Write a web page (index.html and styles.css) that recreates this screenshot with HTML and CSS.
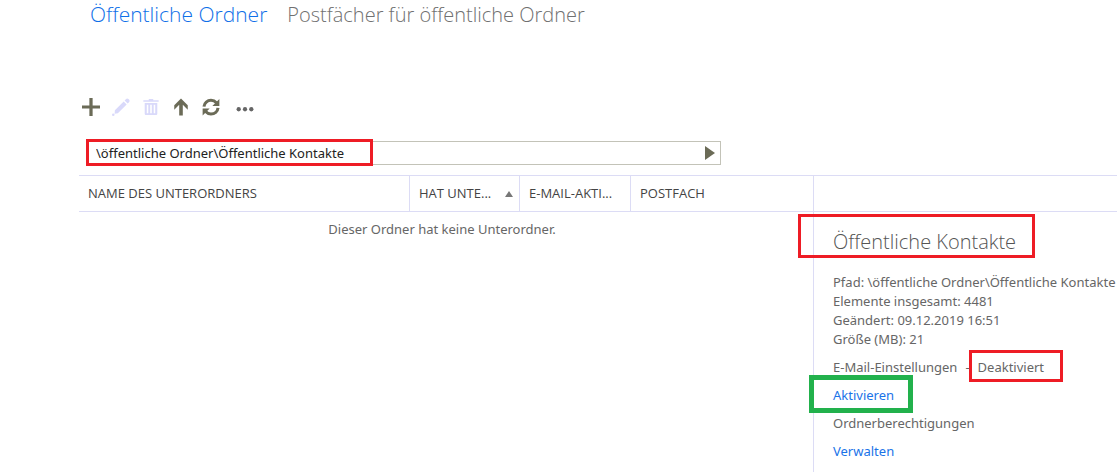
FILE: index.html
```
<!DOCTYPE html>
<html lang="de">
<head>
<meta charset="utf-8">
<title>Öffentliche Ordner</title>
<link rel="stylesheet" href="styles.css">
</head>
<body>
<div class="page">
  <nav class="tabs">
    <a class="tab tab-active" href="#ordner">Öffentliche Ordner</a>
    <a class="tab" href="#postfaecher">Postfächer für öffentliche Ordner</a>
  </nav>

  <div class="toolbar">
    <button class="tool" type="button" aria-label="Neu">
      <svg viewBox="0 0 20 20"><path d="M10 0v20M0 10h20" fill="none" stroke="currentColor" stroke-width="3.600"/></svg>
    </button>
    <button class="tool" type="button" aria-label="Bearbeiten" disabled>
      <svg viewBox="0 0 20 20"><path d="M3.200 13.600 13 3.800l3.300 3.300-9.800 9.800-3.600.6zM14 2.800l1.400-1.500c.9-1 2-1 2.900-.1l.6.6c.9.9.9 2 0 2.900l-1.500 1.500z" fill="currentColor"/><circle cx="1.400" cy="18.600" r="1.400" fill="currentColor"/></svg>
    </button>
    <button class="tool" type="button" aria-label="Löschen" disabled>
      <svg viewBox="0 0 20 20"><path d="M1.500 3.300h17M7.500 1.800h5" fill="none" stroke="currentColor" stroke-width="1.500"/><path d="M3 5.500h14v12c0 .9-.6 1.500-1.500 1.500h-11c-.9 0-1.500-.6-1.500-1.500zM5.300 7.500v9.500h1.700V7.500zm3.800 0v9.500h1.800V7.500zm3.900 0v9.500h1.700V7.500z" fill="currentColor" fill-rule="evenodd"/></svg>
    </button>
    <button class="tool" type="button" aria-label="Übergeordneter Ordner">
      <svg viewBox="0 0 20 20"><path d="M10 .5 17.500 8v5L12 7.500V19.500H8V7.500L2.500 13V8z" fill="currentColor"/></svg>
    </button>
    <button class="tool" type="button" aria-label="Aktualisieren">
      <svg viewBox="0 0 20 20"><path d="M2.200 9.500C2.500 5.500 6 2.600 10 2.600c2.500 0 4.500 1 6 2.700M17.800 11c-.4 4-3.800 6.800-7.800 6.800-2.500 0-4.500-1-6-2.700" fill="none" stroke="currentColor" stroke-width="3.400"/><path d="M19.300 1v7.800h-7.800zM.7 19.400v-7.800h7.800z" fill="currentColor"/></svg>
    </button>
    <button class="tool tool-more" type="button" aria-label="Weitere">
      <svg viewBox="0 0 20 20"><g fill="#666"><circle cx="3" cy="12.500" r="2.400"/><circle cx="10" cy="12.500" r="2.400"/><circle cx="17" cy="12.500" r="2.400"/></g></svg>
    </button>
  </div>

  <form class="path-bar marked mark-path">
    <input class="path-input" type="text" aria-label="Pfad" value="\öffentliche Ordner\Öffentliche Kontakte">
    <button class="path-go" type="button" aria-label="Wechseln zu">
      <svg viewBox="0 0 10 14"><path d="M0 0v14l10-7z" fill="currentColor"/></svg>
    </button>
  </form>

  <main class="content">
    <table class="folders">
      <colgroup><col class="col-name"><col class="col-sub"><col class="col-mail"><col></colgroup>
      <thead>
        <tr>
          <th>NAME DES UNTERORDNERS</th>
          <th><div class="sorted"><span>HAT UNTE...</span><svg class="sort-icon" viewBox="0 0 8 6"><path d="M4 0 8 6H0z" fill="currentColor"/></svg></div></th>
          <th>E-MAIL-AKTI...</th>
          <th>POSTFACH</th>
        </tr>
      </thead>
      <tbody>
        <tr><td colspan="4">Dieser Ordner hat keine Unterordner.</td></tr>
      </tbody>
    </table>

    <section class="details">
      <div class="details-head"></div>
      <div class="details-body">
        <h1 class="title"><span class="marked mark-title">Öffentliche Kontakte</span></h1>
        <p class="facts">Pfad: \öffentliche Ordner\Öffentliche Kontakte<br>Elemente insgesamt: 4481<br>Geändert: 09.12.2019 16:51<br>Größe (MB): 21</p>
        <p class="line status"><span>E-Mail-Einstellungen</span> <span>-</span> <span class="marked mark-status">Deaktiviert</span></p>
        <p class="line"><a class="link marked mark-action" href="#aktivieren">Aktivieren</a></p>
        <p class="line">Ordnerberechtigungen</p>
        <p class="line"><a class="link" href="#verwalten">Verwalten</a></p>
      </div>
    </section>
  </main>
</div>
</body>
</html>
```
FILE: styles.css
```
*, *::after { box-sizing: border-box; }

body {
  margin: 0;
  background: #fff;
  color: #666;
  font: 13px/19px "Segoe UI", "Noto Sans", "Open Sans", sans-serif;
  overflow: hidden;
}

.page {
  display: flex;
  flex-direction: column;
  min-height: 100vh;
  padding-left: 79px;
}

.tabs {
  display: flex;
  gap: 20px;
  padding-left: 11px;
  font-family: "Segoe UI", "Open Sans", sans-serif;
  font-size: 20px;
  font-weight: 300;
  line-height: 29px;
}

.tab { color: #707070; text-decoration: none; white-space: nowrap; }
.tab-active { color: #0f6fe8; font-size: 21px; }

.toolbar {
  display: flex;
  gap: 12px;
  margin-top: 69px;
  padding-left: 3px;
}

.tool {
  width: 18px;
  height: 18px;
  padding: 0;
  border: 0;
  background: none;
  color: #6b6b57;
}
.tool:disabled { color: #d9d9fa; }
.tool svg { display: block; width: 18px; height: 18px; }
.tool-more { margin-left: 4px; }

.path-bar {
  display: flex;
  align-items: center;
  width: 635px;
  height: 24px;
  margin: 25px 0 10px 7px;
  padding-right: 5px;
  border: 1px solid #c3c3b8;
}
.path-input {
  flex: 1;
  min-width: 0;
  padding: 0 9px;
  border: 0;
  background: none;
  color: #222;
  font: inherit;
}
.path-go { padding: 0; border: 0; background: none; color: #6b6b57; }
.path-go svg { display: block; width: 10px; height: 14px; }

.content {
  display: grid;
  grid-template-columns: 734px minmax(0, 1fr);
  flex: 1;
  align-items: stretch;
}

.folders {
  align-self: start;
  width: 100%;
  border-collapse: separate;
  border-spacing: 0;
  table-layout: fixed;
}
.col-name { width: 331px; }
.col-sub { width: 110px; }
.col-mail { width: 111px; }

.folders th {
  height: 37px;
  padding: 0 6px 0 9px;
  border-top: 1px solid #dcdcf5;
  border-bottom: 1px solid #dcdcf5;
  border-right: 1px solid #dcdcf5;
  color: #444;
  font-family: "Segoe UI", "Open Sans", sans-serif;
  font-size: 13px;
  font-weight: 400;
  text-align: left;
  white-space: nowrap;
}
.folders th:last-child { border-right: 0; }
.folders td { padding: 8px 8px 0 0; text-align: center; }

.sorted { display: flex; align-items: center; justify-content: space-between; }
.sort-icon { width: 8px; height: 6px; color: #777; }

.details {
  border-left: 1px solid #dcdcf5;
  white-space: nowrap;
}
.details-head {
  height: 37px;
  border-top: 1px solid #dcdcf5;
  border-bottom: 1px solid #dcdcf5;
}
.details-body { padding: 16px 0 0 19px; }

.title {
  margin: 0;
  color: #555;
  font-family: "Segoe UI", "Open Sans", sans-serif;
  font-size: 20px;
  font-weight: 300;
  line-height: 28px;
}
.facts { margin: 17px 0 9px; }
.line { margin: 0 0 9px; }
.status { display: flex; gap: 8px; }
.link { color: #1a73e8; text-decoration: none; }

/* Highlight frames over the relevant values */
.marked { position: relative; }
.marked::after {
  content: "";
  position: absolute;
  border: 3px solid #ee1c25;
  pointer-events: none;
}
.mark-path::after { top: -3px; bottom: -2px; left: -1px; width: 287px; }
.mark-title::after { inset: -14px -19px -3px -35px; }
.mark-status::after { inset: -8px -19px -5px -9px; }
.mark-action::after { inset: -11px -19px -9px -24px; border: 5px solid #22b14c; }
```
